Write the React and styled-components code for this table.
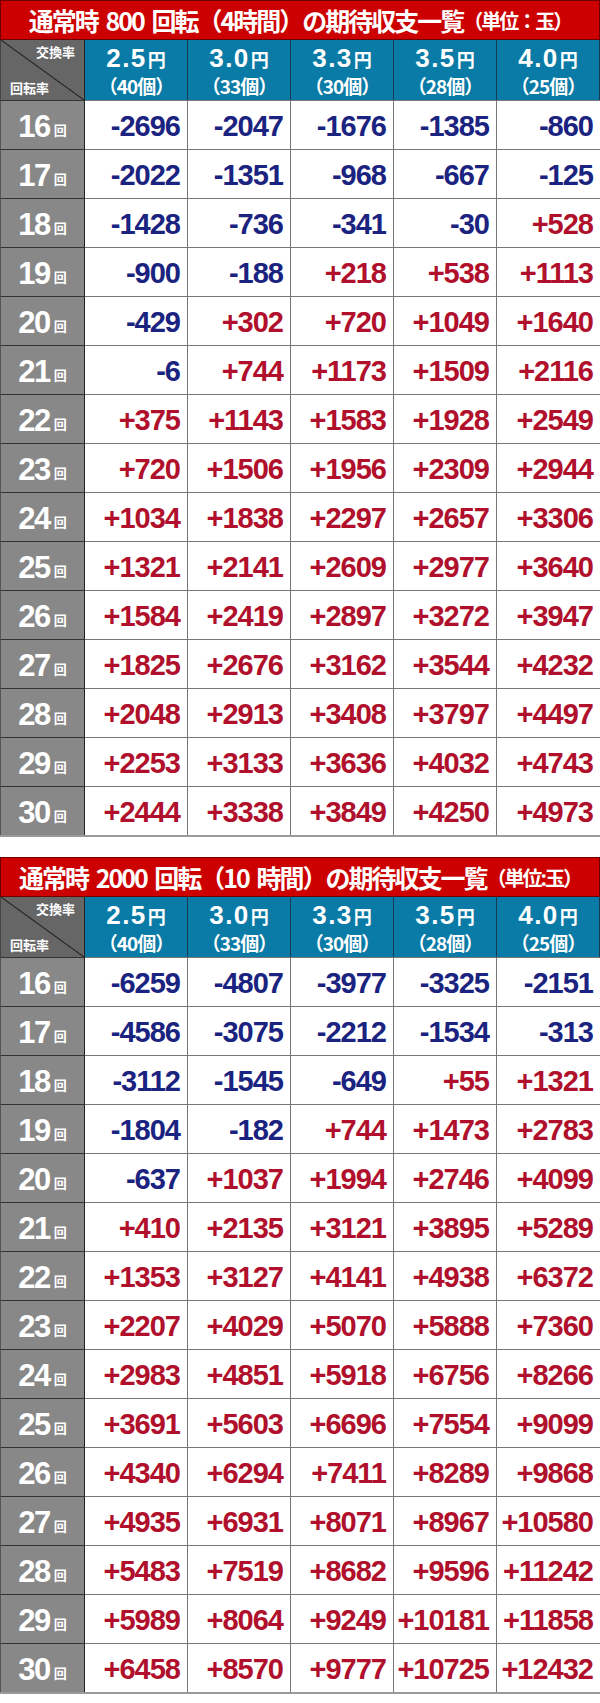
import React from "react";
import styled, { createGlobalStyle } from "styled-components";

const GlobalStyle = createGlobalStyle`
  html, body {
    margin: 0;
    padding: 0;
    background: #fff;
  }
`;

const JP = `"Noto Sans CJK JP", "Liberation Sans", sans-serif`;
const NUM = `"Liberation Sans", Arial, "Noto Sans CJK JP", sans-serif`;

const Page = styled.div`
  width: 600px;
  display: flex;
  flex-direction: column;
  gap: 20px;
`;

const TitleBar = styled.h2`
  margin: 0;
  height: 40px;
  box-sizing: border-box;
  background: #cc0000;
  border: 1px solid #6e0000;
  color: #fff;
  font-family: ${JP};
  font-weight: 700;
  font-size: 25px;
  letter-spacing: -2px;
  word-spacing: 4px;
  display: flex;
  align-items: center;
  justify-content: center;
  white-space: pre;
`;

const TitleNote = styled.span`
  font-size: 20px;
  letter-spacing: -2px;
`;

const Grid = styled.div`
  display: grid;
  grid-template-columns: 85px repeat(5, 1fr);
  grid-template-rows: 60px;
  grid-auto-rows: 49px;
  border-bottom: 2px solid #9a9a9a;
`;

const Corner = styled.div`
  box-sizing: border-box;
  background: linear-gradient(
    to top right,
    #666 calc(50% - 1px),
    #1e1e1e 50%,
    #666 calc(50% + 1px)
  );
  border-right: 1px solid #222;
  border-left: 1px solid #444;
  display: flex;
  flex-direction: column;
  justify-content: space-between;
  padding: 3px 9px 4px 9px;
  color: #fff;
  font-family: ${JP};
  font-weight: 700;
  font-size: 13px;
  line-height: 17px;
`;

const CornerLabel = styled.span`
  align-self: ${(p) => (p.$end ? "flex-end" : "flex-start")};
`;

const RateCell = styled.div`
  box-sizing: border-box;
  background: #0a7ba6;
  border-right: 1px solid #163a52;
  &:last-child {
    border-right: none;
  }
  color: #fff;
  display: flex;
  flex-direction: column;
  align-items: center;
  justify-content: center;
  gap: 1px;
  font-weight: 700;
`;

const RateMain = styled.div`
  font-family: ${NUM};
  font-size: 26px;
  line-height: 30px;
  letter-spacing: 1.5px;
`;

const Yen = styled.span`
  font-family: ${JP};
  font-size: 18px;
  line-height: 20px;
  margin-left: 1px;
  letter-spacing: 0;
`;

const RateSub = styled.div`
  font-family: ${JP};
  font-size: 19px;
  line-height: 24px;
  letter-spacing: -1px;
`;

const RowLabel = styled.div`
  box-sizing: border-box;
  background: #888;
  border-top: 1px solid #333;
  border-right: 1px solid #222;
  border-left: 1px solid #555;
  color: #fff;
  display: flex;
  align-items: center;
  justify-content: center;
  padding-top: 3px;
`;

const RowNum = styled.span`
  font-family: ${NUM};
  font-weight: 700;
  font-size: 31px;
  letter-spacing: -1.5px;
`;

const RowUnit = styled.span`
  font-family: ${JP};
  font-weight: 700;
  font-size: 13px;
  margin-left: 4px;
  align-self: flex-end;
  margin-bottom: 10px;
`;

const ValueCell = styled.div`
  box-sizing: border-box;
  background: #fff;
  border-top: 1px solid #777;
  border-right: 1px solid #777;
  &:last-child {
    border-right: none;
  }
  display: flex;
  align-items: center;
  justify-content: flex-end;
  padding: 2px 7px 0 0;
  font-family: ${NUM};
  font-weight: 700;
  font-size: 29px;
  letter-spacing: -1px;
  color: ${(p) => (p.$minus ? "#1b2380" : "#b0102b")};
`;

const Row = styled.div`
  display: contents;
`;

const RATES = [
  ["2.5", "40"],
  ["3.0", "33"],
  ["3.3", "30"],
  ["3.5", "28"],
  ["4.0", "25"],
];

const TABLE_800 = [
  [-2696, -2047, -1676, -1385, -860],
  [-2022, -1351, -968, -667, -125],
  [-1428, -736, -341, -30, 528],
  [-900, -188, 218, 538, 1113],
  [-429, 302, 720, 1049, 1640],
  [-6, 744, 1173, 1509, 2116],
  [375, 1143, 1583, 1928, 2549],
  [720, 1506, 1956, 2309, 2944],
  [1034, 1838, 2297, 2657, 3306],
  [1321, 2141, 2609, 2977, 3640],
  [1584, 2419, 2897, 3272, 3947],
  [1825, 2676, 3162, 3544, 4232],
  [2048, 2913, 3408, 3797, 4497],
  [2253, 3133, 3636, 4032, 4743],
  [2444, 3338, 3849, 4250, 4973],
];

const TABLE_2000 = [
  [-6259, -4807, -3977, -3325, -2151],
  [-4586, -3075, -2212, -1534, -313],
  [-3112, -1545, -649, 55, 1321],
  [-1804, -182, 744, 1473, 2783],
  [-637, 1037, 1994, 2746, 4099],
  [410, 2135, 3121, 3895, 5289],
  [1353, 3127, 4141, 4938, 6372],
  [2207, 4029, 5070, 5888, 7360],
  [2983, 4851, 5918, 6756, 8266],
  [3691, 5603, 6696, 7554, 9099],
  [4340, 6294, 7411, 8289, 9868],
  [4935, 6931, 8071, 8967, 10580],
  [5483, 7519, 8682, 9596, 11242],
  [5989, 8064, 9249, 10181, 11858],
  [6458, 8570, 9777, 10725, 12432],
];

const fmt = (v) => (v < 0 ? `-${Math.abs(v)}` : `+${v}`);

function PayoutTable({ title, note, rows }) {
  return (
    <section>
      <TitleBar>
        {title}
        <TitleNote>{note}</TitleNote>
      </TitleBar>
      <Grid>
        <Corner>
          <CornerLabel $end>交換率</CornerLabel>
          <CornerLabel>回転率</CornerLabel>
        </Corner>
        {RATES.map(([yen, balls]) => (
          <RateCell key={yen}>
            <RateMain>
              {yen}
              <Yen>円</Yen>
            </RateMain>
            <RateSub>（{balls}個）</RateSub>
          </RateCell>
        ))}
        {rows.map((vals, i) => (
          <Row key={i}>
            <RowLabel>
              <RowNum>{16 + i}</RowNum>
              <RowUnit>回</RowUnit>
            </RowLabel>
            {vals.map((v, j) => (
              <ValueCell key={j} $minus={v < 0}>
                {fmt(v)}
              </ValueCell>
            ))}
          </Row>
        ))}
      </Grid>
    </section>
  );
}

export default function App() {
  return (
    <>
      <GlobalStyle />
      <Page>
        <PayoutTable
          title="通常時 800 回転（4時間）の期待収支一覧"
          note="（単位：玉）"
          rows={TABLE_800}
        />
        <PayoutTable
          title="通常時 2000 回転（10 時間）の期待収支一覧"
          note="（単位:玉）"
          rows={TABLE_2000}
        />
      </Page>
    </>
  );
}
